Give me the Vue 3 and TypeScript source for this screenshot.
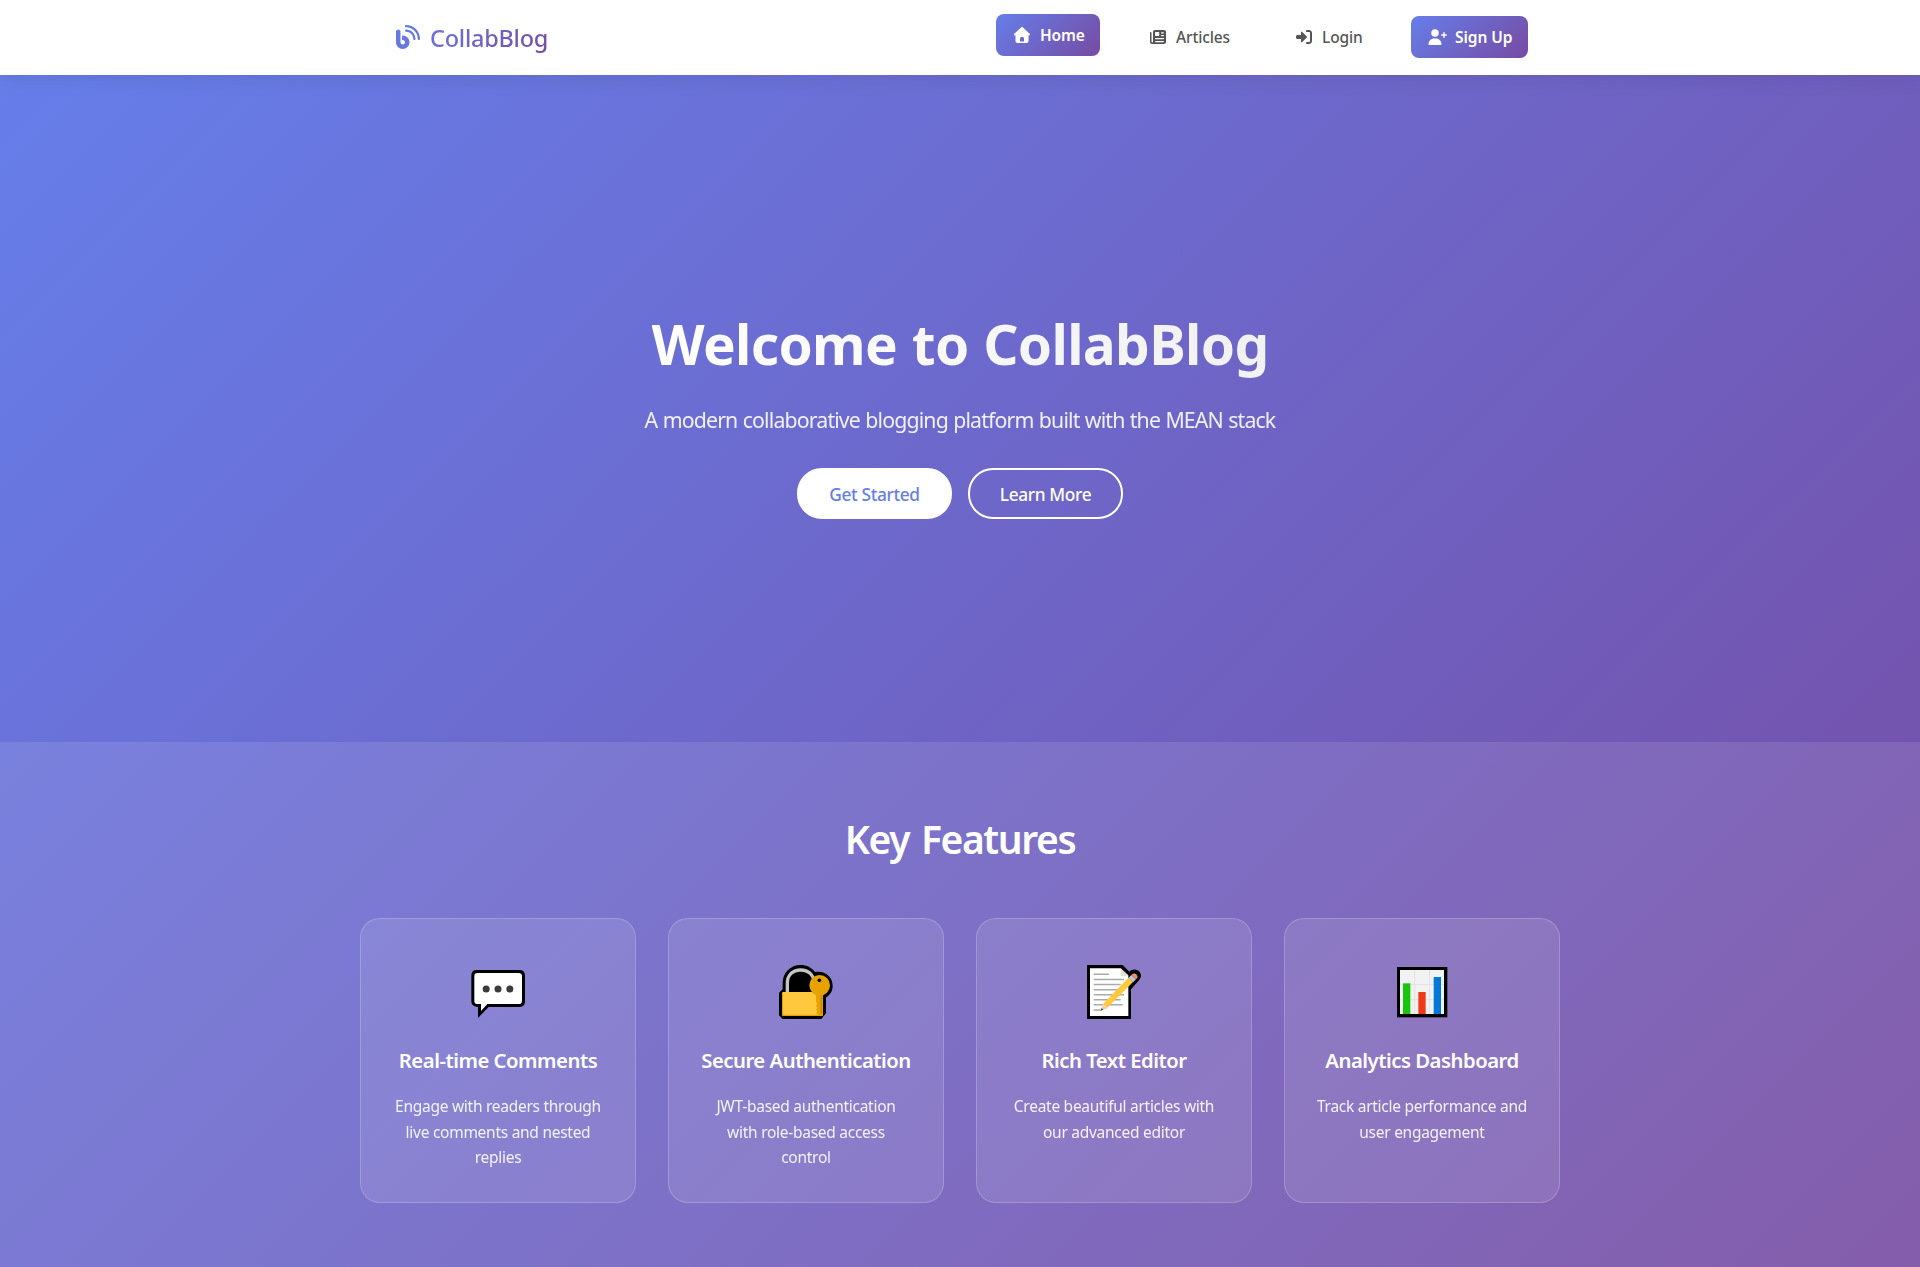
<script setup lang="ts">
interface Feature {
  icon: 'comments' | 'lock' | 'editor' | 'chart'
  title: string
  lines: string[]
}

const features: Feature[] = [
  { icon: 'comments', title: 'Real-time Comments', lines: ['Engage with readers through', 'live comments and nested', 'replies'] },
  { icon: 'lock', title: 'Secure Authentication', lines: ['JWT-based authentication', 'with role-based access', 'control'] },
  { icon: 'editor', title: 'Rich Text Editor', lines: ['Create beautiful articles with', 'our advanced editor'] },
  { icon: 'chart', title: 'Analytics Dashboard', lines: ['Track article performance and', 'user engagement'] },
]
</script>

<template>
  <div class="page">
    <header class="navbar">
      <div class="nav-inner">
        <a class="brand">
          <svg class="brand-icon" viewBox="0 0 512 512">
            <defs>
              <linearGradient id="brandFill" x1="0" y1="0" x2="1" y2="1">
                <stop offset="0" stop-color="#667eea" />
                <stop offset="1" stop-color="#6a72d8" />
              </linearGradient>
            </defs>
            <path fill="url(#brandFill)" d="M192 24c0 13.300 10.700 24 24 24c136.900 0 248 111.100 248 248c0 13.300 10.700 24 24 24s24-10.700 24-24C512 132.500 379.500 0 216 0c-13.300 0-24 10.700-24 24zm0 96c0 13.300 10.700 24 24 24c83.900 0 152 68.100 152 152c0 13.300 10.700 24 24 24s24-10.700 24-24c0-110.500-89.500-200-200-200c-13.300 0-24 10.700-24 24zM96 144c0-26.500-21.500-48-48-48S0 117.500 0 144V368c0 79.500 64.500 144 144 144s144-64.500 144-144s-64.500-144-144-144H128v96h16c26.500 0 48 21.500 48 48s-21.500 48-48 48s-48-21.500-48-48V144z" />
          </svg>
          <span class="brand-name">CollabBlog</span>
        </a>
        <nav class="nav-links">
          <a class="nav-link active">
            <svg class="nav-icon" viewBox="0 0 512 512"><path d="M277.800 8.600c-12.300-11.400-31.300-11.400-43.500 0l-224 208c-9.600 9-12.800 22.900-8 35.100S18.800 272 32 272l16 0 0 176c0 35.300 28.700 64 64 64l288 0c35.300 0 64-28.700 64-64l0-176 16 0c13.200 0 25-8.100 29.800-20.300s1.600-26.200-8-35.100l-224-208zM240 320l32 0c26.500 0 48 21.500 48 48l0 96-128 0 0-96c0-26.500 21.500-48 48-48z" /></svg>
            <span class="label home">Home</span>
          </a>
          <a class="nav-link">
            <svg class="nav-icon" viewBox="0 0 512 512"><path fill-rule="evenodd" d="M0 416L0 120c0-13.300 10.700-24 24-24s24 10.700 24 24l0 288c0 13.300 10.700 24 24 24s24-10.700 24-24L96 96c0-35.300 28.700-64 64-64l288 0c35.300 0 64 28.700 64 64l0 320c0 35.300-28.700 64-64 64L64 480c-35.300 0-64-28.700-64-64zM184 96c-13.300 0-24 10.700-24 24l0 80c0 13.300 10.700 24 24 24l88 0c13.300 0 24-10.700 24-24l0-80c0-13.300-10.700-24-24-24zM372 100c-11 0-20 9-20 20s9 20 20 20l56 0c11 0 20-9 20-20s-9-20-20-20zM372 188c-11 0-20 9-20 20s9 20 20 20l56 0c11 0 20-9 20-20s-9-20-20-20zM180 284c-11 0-20 9-20 20s9 20 20 20l248 0c11 0 20-9 20-20s-9-20-20-20zM180 380c-11 0-20 9-20 20s9 20 20 20l248 0c11 0 20-9 20-20s-9-20-20-20z" /></svg>
            <span class="label articles">Articles</span>
          </a>
          <a class="nav-link">
            <svg class="nav-icon" viewBox="0 0 512 512"><path d="M345 273c9.400-9.400 9.400-24.600 0-33.900L201 95c-6.900-6.900-17.200-8.900-26.200-5.200S160 102.300 160 112l0 80-112 0c-26.500 0-48 21.500-48 48l0 32c0 26.500 21.500 48 48 48l112 0 0 80c0 9.700 5.800 18.500 14.800 22.200s19.300 1.700 26.200-5.200L345 273zm7 143c-17.700 0-32 14.300-32 32s14.300 32 32 32l64 0c53 0 96-43 96-96l0-256c0-53-43-96-96-96l-64 0c-17.700 0-32 14.300-32 32s14.300 32 32 32l64 0c17.700 0 32 14.300 32 32l0 256c0 17.700-14.300 32-32 32l-64 0z" /></svg>
            <span class="label login">Login</span>
          </a>
          <a class="nav-link signup">
            <svg class="nav-icon wide" viewBox="0 0 640 512"><path d="M136 128a120 120 0 1 1 240 0 120 120 0 1 1-240 0zM48 482.300C48 383.800 127.800 304 226.300 304l59.400 0c98.500 0 178.300 79.800 178.300 178.300 0 16.400-13.300 29.700-29.700 29.700L77.700 512C61.300 512 48 498.700 48 482.300zM544 96c13.300 0 24 10.700 24 24l0 48 48 0c13.300 0 24 10.700 24 24s-10.700 24-24 24l-48 0 0 48c0 13.300-10.700 24-24 24s-24-10.700-24-24l0-48-48 0c-13.300 0-24-10.700-24-24s10.700-24 24-24l48 0 0-48c0-13.300 10.700-24 24-24z" /></svg>
            <span class="label sign">Sign Up</span>
          </a>
        </nav>
      </div>
    </header>

    <main class="content">
      <section class="hero">
        <h1 class="hero-title">Welcome to CollabBlog</h1>
        <p class="hero-sub">A modern collaborative blogging platform built with the MEAN stack</p>
        <div class="hero-actions">
          <a class="btn primary">Get Started</a>
          <a class="btn outline">Learn More</a>
        </div>
      </section>

      <section class="features">
        <h2 class="section-title">Key Features</h2>
        <div class="cards">
          <article v-for="f in features" :key="f.title" class="card">
            <svg v-if="f.icon === 'comments'" class="card-icon" viewBox="54 30 180 180">
              <path d="M80 60h128q17 0 17 17v77q0 17-17 17h-92l-32 33v-33q-20-1-20-17V77q0-17 16-17z" fill="#000" />
              <path d="M82 69h124q10 0 10 10v73q0 10-10 10h-94l-19 21v-21H82q-9 0-9-10V79q0-10 9-10z" fill="#fff" />
              <g fill="#3b3a3c"><circle cx="108.500" cy="117" r="10.500" /><circle cx="144" cy="117" r="10.500" /><circle cx="179.500" cy="117" r="10.500" /></g>
            </svg>
            <svg v-else-if="f.icon === 'lock'" class="card-icon" viewBox="48 30 180 180">
              <path d="M68 118V99c0-31 24-54 54-54 18 0 33 8 43 21 29-5 53 14 53 41 0 16-8 28-20 35v48l-14 17H68l-11-11v-68z" fill="#000" />
              <path d="M82 127V99c0-25 17-39 40-39s40 14 40 39v28" fill="none" stroke="#c4c4c4" stroke-width="10" />
              <rect x="66" y="126" width="123" height="72" rx="4" fill="#ffc83d" />
              <path d="M66 130v64l4 4h114l5-5v-5l-4 6H72l-3-4v-60z" fill="#e8a200" />
              <path d="M168 126h21v67l-5 5h-8l-7-9 3-5-4-5 4-6-4-6 4-6-4-6z" fill="#e8a200" />
              <path d="M182 134h3v57h-3z" fill="#bd7f00" />
              <circle cx="179" cy="106" r="31" fill="#e8a200" />
              <circle cx="178" cy="91" r="5.500" fill="#000" />
            </svg>
            <svg v-else-if="f.icon === 'editor'" class="card-icon" viewBox="42 30 180 180">
              <path d="M51 45h107l20 20c7-8 18-9 27-3 10 7 10 20 2 29l-24 27v89H51z" fill="#000" />
              <path d="M60 55h92l23 21v122H60z" fill="#fff" />
              <path d="M152 55l23 23h-23z" fill="#e0e0e0" />
              <path d="M71 72.500h46M71 88.500h91M71 103.500h81M71 119h92M71 134h91M71 149h81M71 164.500h87M71 180h23" stroke="#aaa" stroke-width="4.500" />
              <path d="M175 83l14 13-80 80-17 5 7-19z" fill="#ffc83d" />
              <path d="M99 161l-7 21 20-8z" fill="#f8cfb8" />
              <path d="M95 174l-3 8 8-3z" fill="#444" />
              <path d="M175 84l9-9 14 13-9 9z" fill="#c0c8cb" />
              <path d="M184 75c5-6 12-6 16-1s4 9-2 14z" fill="#ee8b7d" />
            </svg>
            <svg v-else class="card-icon" viewBox="36 30 180 180">
              <rect x="51" y="51" width="151" height="151" fill="#000" />
              <rect x="60" y="60" width="132" height="132" fill="#f2f2f2" />
              <path d="M104 60v132M149 60v132M60 104h132M60 149h132" stroke="#e2e2e2" stroke-width="3" />
              <path d="M69 100h22v92H69z" fill="#16c60c" />
              <path d="M115 126h22v66h-22z" fill="#f03a17" />
              <path d="M161 81h22v111h-22z" fill="#0078d7" />
            </svg>
            <h3 class="card-title">{{ f.title }}</h3>
            <p class="card-text"><span v-for="l in f.lines" :key="l" class="line">{{ l }}</span></p>
          </article>
        </div>
      </section>
    </main>
  </div>
</template>

<style>
body {
  margin: 0;
}
</style>

<style scoped>
.page {
  font-family: 'Segoe UI', 'Noto Sans', 'Open Sans', sans-serif;
  min-height: 1267px;
  display: flex;
  flex-direction: column;
}
.navbar {
  position: relative;
  z-index: 1;
  height: 75px;
  background: #fff;
  box-shadow: 0 2px 20px rgba(0, 0, 0, 0.1);
}
.nav-inner {
  box-sizing: border-box;
  width: 1200px;
  height: 75px;
  margin: 0 auto;
  padding: 0 32px 1px;
  display: flex;
  align-items: center;
  justify-content: space-between;
}
.brand {
  display: flex;
  align-items: center;
  gap: 10px;
  padding-left: 4px;
}
.brand-icon {
  width: 24px;
  height: 24px;
}
.brand-name {
  font-size: 23.500px;
  font-weight: 500;
  line-height: 34px;
  letter-spacing: -0.250px;
  padding-top: 1px;
  background: linear-gradient(135deg, #6a76df 0%, #764ba2 100%);
  background-clip: text;
  -webkit-background-clip: text;
  color: transparent;
}
.nav-links {
  display: flex;
  align-items: center;
  gap: 32px;
}
.nav-link {
  box-sizing: border-box;
  height: 42px;
  padding: 0 16px 0 18px;
  display: flex;
  align-items: center;
  gap: 10px;
  border-radius: 8px;
  color: #555;
  font-size: 15.500px;
  font-weight: 500;
  line-height: 24px;
  letter-spacing: -0.150px;
}
.nav-icon {
  flex: none;
  width: 16px;
  height: 16px;
  fill: currentColor;
}
.nav-icon.wide {
  width: 20px;
}
.label {
  white-space: nowrap;
}
.home {
  width: 44px;
}
.articles {
  width: 54px;
}
.login {
  width: 41px;
}
.sign {
  width: 57px;
}
.active,
.signup {
  background: linear-gradient(135deg, #667eea 0%, #764ba2 100%);
  color: #fff;
  font-weight: 600;
}
.active {
  transform: translateY(-2px);
}
.signup {
  padding: 0 16px;
  gap: 8px;
  letter-spacing: -0.050px;
}
.content {
  flex: 1;
  background: linear-gradient(135deg, #667eea 0%, #764ba2 100%);
  color: #fff;
}
.hero {
  box-sizing: border-box;
  height: 667px;
  padding-top: 235px;
  text-align: center;
}
.hero-title {
  width: fit-content;
  margin: 0 auto;
  padding-bottom: 6px;
  font-size: 55px;
  font-weight: 700;
  line-height: 67px;
  letter-spacing: -0.700px;
  word-spacing: 1px;
  background: linear-gradient(45deg, #fff, #f0f0f0);
  background-clip: text;
  -webkit-background-clip: text;
  color: transparent;
}
.hero-sub {
  margin: 19px 0 0;
  font-size: 21.300px;
  line-height: 36px;
  letter-spacing: -0.850px;
  word-spacing: 0.600px;
  opacity: 0.9;
}
.hero-actions {
  margin-top: 30px;
  display: flex;
  justify-content: center;
  gap: 16px;
}
.btn {
  box-sizing: border-box;
  width: 155px;
  height: 51px;
  border: 2px solid #fff;
  border-radius: 25px;
  padding-top: 1px;
  display: flex;
  align-items: center;
  justify-content: center;
  font-size: 17.300px;
  font-weight: 500;
  letter-spacing: -0.350px;
}
.primary {
  background: #fff;
  color: #667eea;
}
.features {
  box-sizing: border-box;
  height: 525px;
  padding-top: 70px;
  background: rgba(255, 255, 255, 0.1);
}
.section-title {
  margin: 0 0 52px;
  text-align: center;
  font-size: 39px;
  font-weight: 600;
  line-height: 54px;
  letter-spacing: -1.400px;
  word-spacing: 3px;
}
.cards {
  width: 1200px;
  margin: 0 auto;
  display: grid;
  grid-template-columns: repeat(4, 1fr);
  gap: 32px;
}
.card {
  box-sizing: border-box;
  height: 285px;
  padding-top: 41px;
  border: 1px solid rgba(255, 255, 255, 0.2);
  border-radius: 20px;
  background: rgba(255, 255, 255, 0.1);
  text-align: center;
}
.card-icon {
  display: block;
  width: 60px;
  height: 60px;
  margin: 0 auto;
}
.card-title {
  margin: 24px 0 18px;
  font-size: 20.300px;
  font-weight: 600;
  line-height: 32px;
  letter-spacing: -0.480px;
}
.card-text {
  margin: 0;
  font-size: 15.500px;
  line-height: 25.600px;
  letter-spacing: -0.270px;
  opacity: 0.9;
}
.line {
  display: block;
}
</style>
